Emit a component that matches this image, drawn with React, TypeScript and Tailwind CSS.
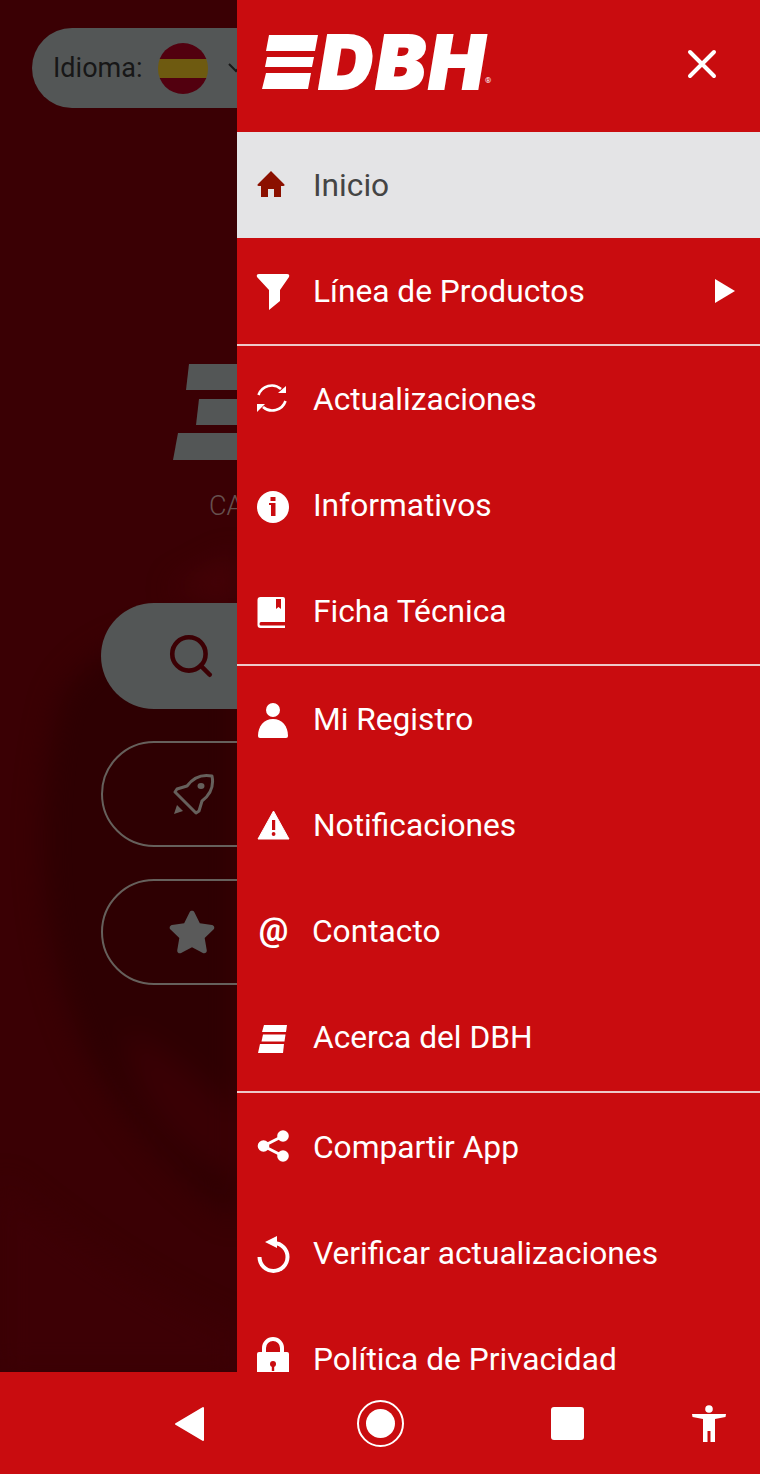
import { ReactNode } from "react";
import { Search } from "lucide-react";
import { FaStar } from "react-icons/fa";

const RED = "#c90c0f";

function Icon({ children, fill = "white" }: { children: ReactNode; fill?: string }) {
  return (
    <svg width="40" height="40" viewBox="0 0 40 40" fill={fill} className="shrink-0 overflow-visible">
      {children}
    </svg>
  );
}

function Row({ icon, label, active, right, textClass }: { icon: ReactNode; label: string; active?: boolean; right?: ReactNode; textClass?: string }) {
  return (
    <div className={"flex items-center shrink-0 h-[106px] pl-[17px] " + (active ? "bg-[#e4e4e6]" : "")}>
      {icon}
      <span className={"text-[31.7px] leading-none pt-[2px] " + (active ? "text-[#444444] " : "text-white ") + (textClass || "ml-[19px]")}>{label}</span>
      {right}
    </div>
  );
}

function Divider() {
  return <div className="h-[2px] shrink-0 bg-[#eec9c9]" />;
}

export default function App() {
  return (
    <div className="w-[760px] h-[1474px] flex flex-col overflow-hidden bg-[#c90c0f] font-['Roboto',sans-serif]">
      <div className="flex h-[1372px] overflow-hidden">
        {/* dimmed home page behind the drawer */}
        <div className="relative w-[237px] shrink-0 overflow-hidden bg-[#3a0004]">
          <svg width="237" height="1372" viewBox="0 0 237 1372" className="absolute inset-0 blur-[14px]">
            <path d="M60 700 C30 820 40 960 90 1060 C150 1160 210 1200 237 1220 L237 640 C170 620 90 640 60 700Z" fill="#2e0002" />
            <path d="M125 1030 C170 1050 210 1090 237 1110 L237 1180 C190 1160 130 1120 125 1030Z" fill="#390004" />
            <path d="M0 1180 C60 1230 140 1290 237 1330 L237 1372 L0 1372Z" fill="#3d0005" />
            <path d="M170 590 L237 555 L237 600 Z" fill="#460207" />
          </svg>
          <div className="relative flex flex-col w-[700px]">
            <div className="ml-[32px] mt-[28px] h-[80px] w-[400px] rounded-[40px] bg-[#535656] flex items-center pl-[21px]">
              <span className="text-[27px] leading-none text-[#171717]">Idioma:</span>
              <div className="ml-[16px] w-[50px] h-[51px] rounded-full overflow-hidden flex flex-col">
                <div className="h-[16px] bg-[#52000f]" />
                <div className="h-[19px] bg-[#6e5a10]" />
                <div className="h-[16px] bg-[#52000f]" />
              </div>
              <svg width="16" height="10" viewBox="0 0 16 10" fill="none" stroke="#171717" strokeWidth="2" className="ml-[20px]">
                <path d="M1 1 L8 8 L15 1" />
              </svg>
            </div>
            <svg width="120" height="96" viewBox="0 0 120 96" fill="#535656" className="ml-[173px] mt-[256px]">
              <path d="M16 0 H120 V26 H13 Z" />
              <path d="M26 35 H120 V61 H23 Z" />
              <path d="M5 69 H120 V96 H0 Z" />
            </svg>
            <div className="ml-[209px] mt-[31px] h-[30px] text-[27px] leading-[30px] font-light text-[#66504f]">CA</div>
            <div className="ml-[101px] mt-[82px] h-[106px] w-[400px] rounded-[53px] bg-[#535656] flex items-center pl-[65px]">
              <Search size={50} strokeWidth={2.2} color="#3c0004" />
            </div>
            <div className="ml-[101px] mt-[32px] h-[106px] w-[400px] rounded-[53px] border-2 border-[#66605c] flex items-center pl-[69px]">
              <svg width="44" height="44" viewBox="0 0 44 44" fill="none" stroke="#66605c" strokeWidth="3" strokeLinejoin="round">
                <path d="M40 4 C30 2 21 6 15 14 L5 17 L3 20 L24 41 L27 39 L30 29 C38 23 42 14 40 4Z" />
                <ellipse cx="29" cy="14" rx="3.5" ry="3" fill="#66605c" stroke="none" />
                <path d="M2 42 L5 33 L11 39 Z" fill="#66605c" stroke="none" />
              </svg>
            </div>
            <div className="ml-[101px] mt-[32px] h-[106px] w-[400px] rounded-[53px] border-2 border-[#66605c] flex items-center pl-[65px]">
              <FaStar size={48} color="#5a5a5a" />
            </div>
          </div>
        </div>

        {/* drawer */}
        <div className="flex-1 flex flex-col overflow-hidden">
          <div className="h-[132px] shrink-0 flex items-center pl-[25px]">
            <svg width="58" height="54" viewBox="0 0 58 54" fill="white" className="shrink-0 mb-[9px]">
              <path d="M7 0 H56 L53 16 H4 Z" />
              <path d="M5 22 H52 L50 32 H3 Z" />
              <path d="M4 38 H49 L46 54 H0 Z" />
            </svg>
            <span className="ml-[-1px] mb-[9px] text-[74px] leading-none font-black italic text-white font-['Inter',sans-serif] tracking-[3.5px] [-webkit-text-stroke:2px_white]">DBH</span>
            <span className="self-start mt-[77px] ml-[-3px] text-[8px] leading-none text-white">®</span>
            <svg width="30" height="30" viewBox="0 0 30 30" fill="none" stroke="white" strokeWidth="4" strokeLinecap="round" className="ml-auto mr-[43px] mb-[4px]">
              <path d="M3 3 L27 27 M27 3 L3 27" />
            </svg>
          </div>

          <Row
            active
            label="Inicio"
            icon={
              <Icon fill="#8b1000">
                <path d="M17 6 L30.500 19.500 Q31 21 29 21 H27 V32 H20 V24 H14 V32 H7 V21 H5 Q3 21 3.500 19.500 Z" />
              </Icon>
            }
          />
          <Row
            label="Línea de Productos"
            right={
              <svg width="20" height="24" viewBox="0 0 20 24" fill="white" className="ml-auto mr-[25px]">
                <path d="M0 0 L20 12 L0 24 Z" />
              </svg>
            }
            icon={
              <Icon>
                <path d="M5 3 H33 Q36 3 35 6 L26 19 V30 L15 39 V19 L3 6 Q2 3 5 3Z" />
              </Icon>
            }
          />
          <Divider />
          <Row
            label="Actualizaciones"
            icon={
              <Icon>
                <path d="M4.500 16 A14 14 0 0 1 27 10" fill="none" stroke="white" strokeWidth="2.600" />
                <path d="M32 7 V14 H24 Z" />
                <path d="M31.500 22 A14 14 0 0 1 9 28" fill="none" stroke="white" strokeWidth="2.600" />
                <path d="M3 33 V25 H11 Z" />
              </Icon>
            }
          />
          <Row
            label="Informativos"
            icon={
              <Icon>
                <circle cx="19" cy="22" r="16" />
                <rect x="16.500" y="12" width="5" height="4" fill={RED} />
                <path d="M15 18 H21.500 V31 H17 V20 H15 Z" fill={RED} />
              </Icon>
            }
          />
          <Row
            label="Ficha Técnica"
            icon={
              <Icon>
                <path d="M6.500 6 H29 Q31 6 31 8 V31 H7 Q5.500 31 5.500 33 Q5.500 34.500 7 34.500 H31 V37 H6.500 Q3.500 37 3.500 34 V9 Q3.500 6 6.500 6Z" />
                <path d="M22 8 H27 V18 L24.500 16 L22 18 Z" fill={RED} />
              </Icon>
            }
          />
          <Divider />
          <Row
            label="Mi Registro"
            icon={
              <Icon>
                <circle cx="19" cy="11" r="7" />
                <path d="M4 37 C4 27 10 20 19 20 C28 20 34 27 34 37 Q34 39 32 39 H6 Q4 39 4 37Z" />
              </Icon>
            }
          />
          <Row
            label="Notificaciones"
            icon={
              <Icon>
                <path d="M19.500 6 L35 34 H4 Z" stroke="white" strokeLinejoin="round" />
                <rect x="18" y="15" width="3.200" height="10" fill={RED} />
                <circle cx="19.600" cy="29" r="1.900" fill={RED} />
              </Icon>
            }
          />
          <Row
            label="Contacto"
            textClass="ml-[18px]"
            icon={
              <div className="w-[40px] h-[40px] shrink-0 flex items-center justify-center pb-[3px] pr-[1px] text-[33px] leading-none font-bold text-white">@</div>
            }
          />
          <Row
            label="Acerca del DBH"
            icon={
              <Icon>
                <path d="M10 8 H33 L32 15 H8 Z" />
                <path d="M9 17.500 H31.500 L30.500 24.500 H7.500 Z" />
                <path d="M6 27 H30 L29 36 H4 Z" />
              </Icon>
            }
          />
          <div className="h-[2px] my-[1px] shrink-0 bg-[#eec9c9]" />
          <Row
            label="Compartir App"
            icon={
              <Icon>
                <path d="M29 9 L9.500 19 L29 29" fill="none" stroke="white" strokeWidth="3" />
                <circle cx="29" cy="9" r="5.800" />
                <circle cx="9.500" cy="19" r="5.800" />
                <circle cx="29" cy="29" r="5.800" />
              </Icon>
            }
          />
          <Row
            label="Verificar actualizaciones"
            icon={
              <Icon>
                <path d="M20 10 A14 14 0 1 1 5.500 24" fill="none" stroke="white" strokeWidth="4" />
                <path d="M11 9 L23 3 V15 Z" />
              </Icon>
            }
          />
          <Row
            label="Política de Privacidad"
            icon={
              <Icon>
                <path d="M10 14 V9 A9 9 0 0 1 28 9 V14" fill="none" stroke="white" strokeWidth="4" />
                <rect x="3" y="13" width="32" height="30" rx="2" />
                <circle cx="19" cy="25" r="3" fill={RED} />
                <rect x="17.800" y="25" width="2.400" height="7" fill={RED} />
              </Icon>
            }
          />
        </div>
      </div>

      {/* android nav bar */}
      <div className="h-[101px] shrink-0 flex items-center pl-[174px] pt-[2px]">
        <svg width="30" height="36" viewBox="0 0 30 36" fill="white" stroke="white" strokeWidth="2" strokeLinejoin="round">
          <path d="M29 2 V34 L2 18 Z" />
        </svg>
        <div className="ml-[153px] w-[47px] h-[47px] rounded-full border-2 border-white flex items-center justify-center">
          <div className="w-[29px] h-[29px] rounded-full bg-white" />
        </div>
        <div className="ml-[147px] w-[33px] h-[33px] rounded-[3px] bg-white" />
        <svg width="36" height="38" viewBox="0 0 36 38" fill="white" className="ml-[107px]">
          <circle cx="18" cy="4" r="3.800" />
          <path d="M1 9 L35 9 L34.500 12 L24 14 V37 H19.500 V26 H16.500 V37 H12 V14 L1.500 12 Z" />
        </svg>
      </div>
    </div>
  );
}
